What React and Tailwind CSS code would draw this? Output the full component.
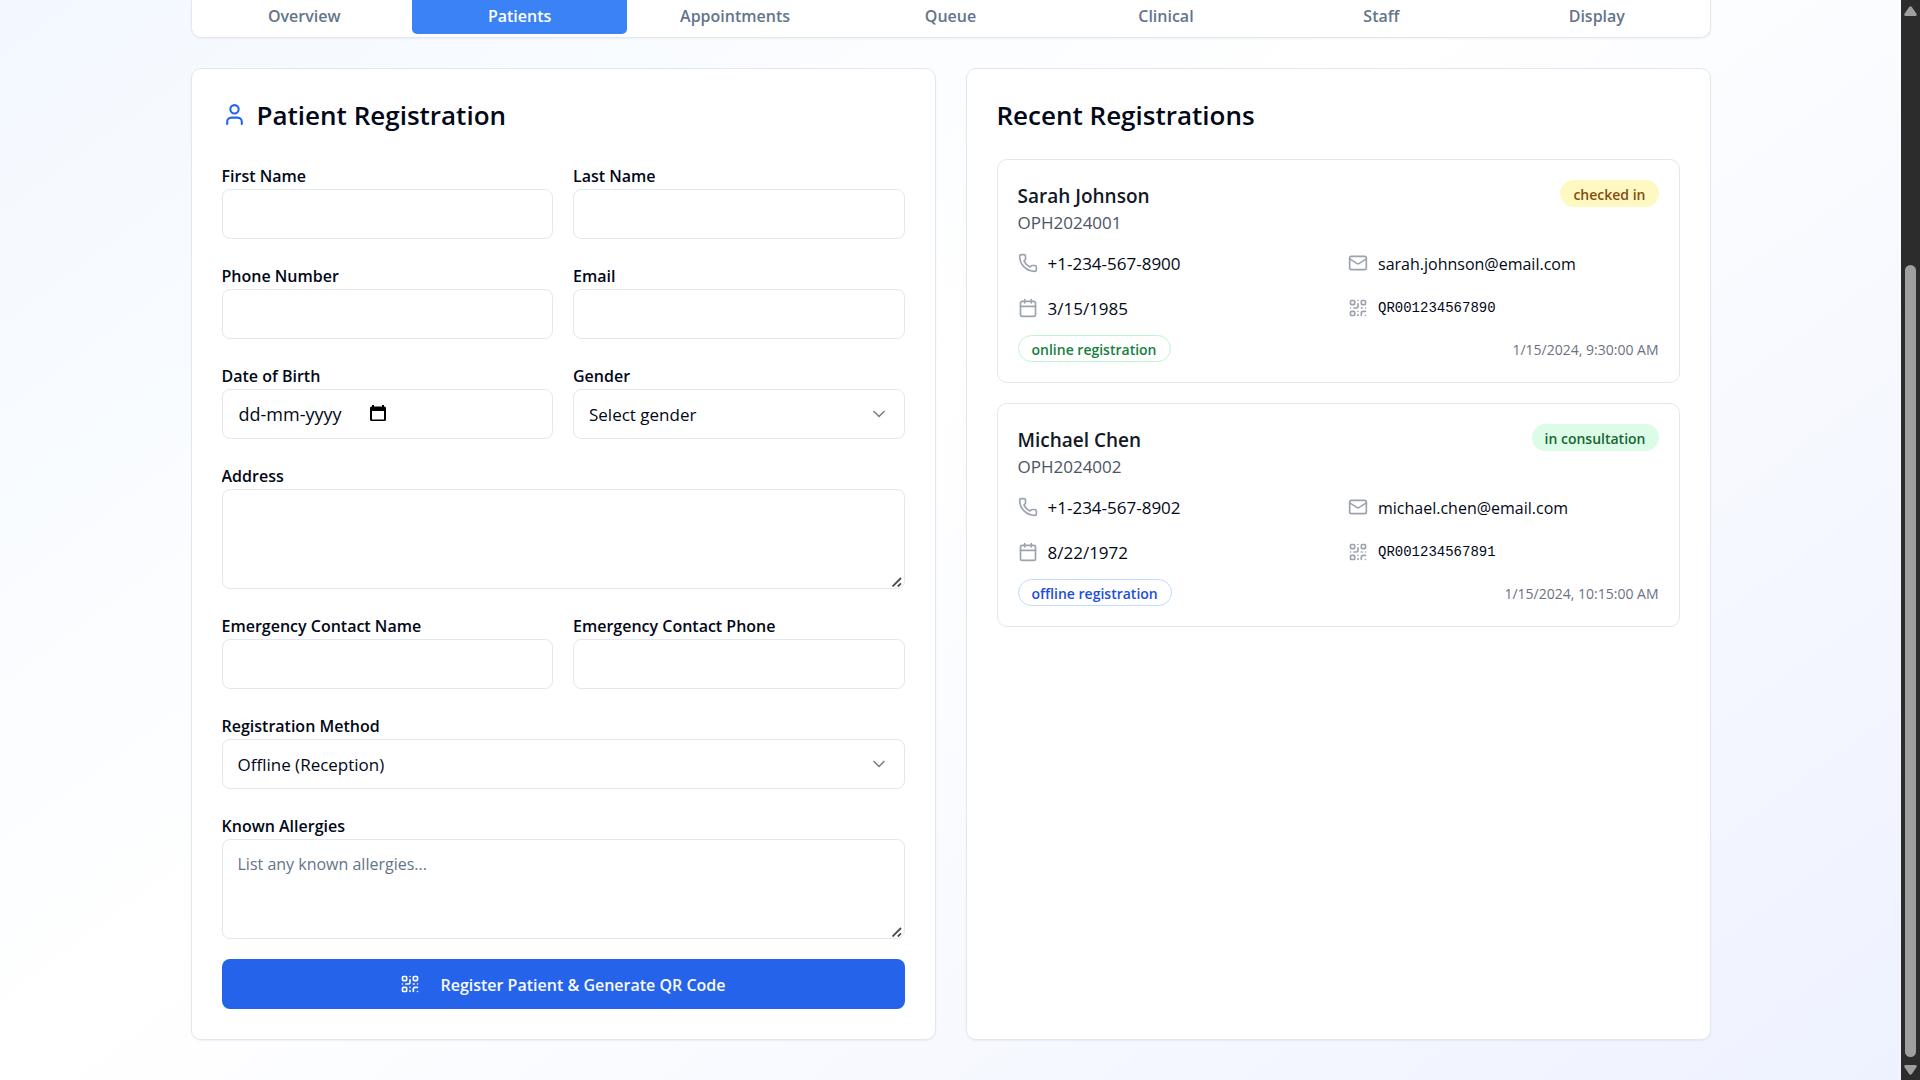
import React from "react";
import { User, Phone, Mail, Calendar, QrCode, ChevronDown } from "lucide-react";

const tabs = ["Overview", "Patients", "Appointments", "Queue", "Clinical", "Staff", "Display"];

const patients = [
  {
    name: "Sarah Johnson",
    id: "OPH2024001",
    phone: "+1-234-567-8900",
    email: "sarah.johnson@email.com",
    born: "3/15/1985",
    qr: "QR001234567890",
    status: "checked in",
    statusClass: "bg-[#fef9c3] text-[#854d0e]",
    method: "online registration",
    methodClass: "border-[#bbf7d0] text-[#15803d]",
    time: "1/15/2024, 9:30:00 AM",
  },
  {
    name: "Michael Chen",
    id: "OPH2024002",
    phone: "+1-234-567-8902",
    email: "michael.chen@email.com",
    born: "8/22/1972",
    qr: "QR001234567891",
    status: "in consultation",
    statusClass: "bg-[#dcfce7] text-[#166534]",
    method: "offline registration",
    methodClass: "border-[#bfdbfe] text-[#1d4ed8]",
    time: "1/15/2024, 10:15:00 AM",
  },
];

const control =
  "block w-full rounded-[8px] border border-[#e2e8f0] bg-white px-[15px] text-[#020817] placeholder:text-[#64748b] outline-none focus:border-[#2563eb]";

function Field({ id, label, children }) {
  return (
    <div>
      <label htmlFor={id} className="block h-[30px] truncate pt-1 text-base leading-[26px] font-semibold">
        {label}
      </label>
      {children}
    </div>
  );
}

function TextField({ id, label, type = "text" }) {
  return (
    <Field id={id} label={label}>
      <input id={id} type={type} className={`${control} h-[50px] text-[17px]`} />
    </Field>
  );
}

function SelectField({ id, label, options }) {
  return (
    <Field id={id} label={label}>
      <div className="relative">
        <select id={id} className={`${control} h-[50px] appearance-none pt-0.5 pr-12 text-[17px]`}>
          {options.map((o) => (
            <option key={o}>{o}</option>
          ))}
        </select>
        <ChevronDown
          size={20}
          className="pointer-events-none absolute top-[15px] right-4 text-[#020817] opacity-50"
        />
      </div>
    </Field>
  );
}

function AreaField({ id, label, placeholder }) {
  return (
    <Field id={id} label={label}>
      <div className="relative">
        <textarea
          id={id}
          placeholder={placeholder}
          className={`${control} h-[100px] resize-y py-3 text-base [&::-webkit-resizer]:bg-transparent`}
        />
        <svg
          width="10"
          height="10"
          viewBox="0 0 10 10"
          className="pointer-events-none absolute right-[3px] bottom-0.5"
          stroke="#4a4a4a"
          strokeWidth="1.800"
        >
          <path d="M.5 9.500 9 1M5.800 9.500 9 6.300" />
        </svg>
      </div>
    </Field>
  );
}

function DateField({ id, label }) {
  return (
    <Field id={id} label={label}>
      <div className="flex h-[50px] items-center rounded-[8px] border border-[#e2e8f0] bg-white px-4">
        <input
          id={id}
          type="text"
          placeholder="dd-mm-yyyy"
          className="w-[130px] bg-transparent text-lg outline-none placeholder:text-[#020817]"
        />
        <button type="button" aria-label="Open calendar" className="mb-0.5">
          <svg width="18" height="18" viewBox="0 0 18 18" fill="none">
            <path
              d="M3 1h2v1.500h8V1h2v1.500h.5A1.500 1.500 0 0 1 17 4v11.500a1.500 1.500 0 0 1-1.500 1.500h-13A1.500 1.500 0 0 1 1 15.500V4a1.500 1.500 0 0 1 1.500-1.500H3zM3 7v8.500h12V7z"
              fill="#000"
              fillRule="evenodd"
            />
          </svg>
        </button>
      </div>
    </Field>
  );
}

function Detail({ icon: Icon, children, kind }) {
  return (
    <div className="flex h-[35px] items-center gap-2.5">
      <Icon size={20} className="shrink-0 text-[#9ca3af]" />
      <span
        className={
          kind === "mono"
            ? "font-['Liberation_Mono',monospace] text-sm leading-5"
            : kind === "email"
              ? "truncate pt-0.5 text-base leading-6"
              : "truncate pt-0.5 text-[17px] leading-6"
        }
      >
        {children}
      </span>
    </div>
  );
}

function PatientCard({ p }) {
  return (
    <li className="rounded-[10px] border border-[#e2e8f0] p-5">
      <div className="flex items-start justify-between">
        <div>
          <h3 className="pt-0.5 text-[19px] leading-7 font-semibold text-[#111827]">{p.name}</h3>
          <p className="pt-[1px] text-[17px] leading-6 text-[#4b5563]">{p.id}</p>
        </div>
        <span className={`flex h-[27px] items-center rounded-full px-[13px] pt-0.5 text-sm font-semibold ${p.statusClass}`}>
          {p.status}
        </span>
      </div>
      <div className="mt-2.5 grid grid-cols-2 gap-x-5 gap-y-2.5">
        <Detail icon={Phone}>{p.phone}</Detail>
        <Detail icon={Mail} kind="email">
          {p.email}
        </Detail>
        <Detail icon={Calendar}>{p.born}</Detail>
        <Detail icon={QrCode} kind="mono">
          {p.qr}
        </Detail>
      </div>
      <div className="mt-2.5 flex items-center justify-between">
        <span className={`flex h-[27px] items-center rounded-full border px-[13px] pt-0.5 text-sm font-semibold ${p.methodClass}`}>
          {p.method}
        </span>
        <time className="pt-0.5 text-sm leading-5 text-[#6b7280]">{p.time}</time>
      </div>
    </li>
  );
}

function ScrollRail() {
  return (
    <div aria-hidden="true" className="flex w-[19px] shrink-0 flex-col items-center bg-[#2c2c2c] pt-1.5 pb-[5px]">
      <svg width="13" height="10" viewBox="0 0 13 10">
        <path d="M5.200 1Q6.500-.6 7.800 1L12.600 8Q13 10 11.500 10h-10Q0 10 .4 8z" fill="#9f9f9f" />
      </svg>
      <div className="flex w-[11px] grow flex-col pt-[249px] pb-2">
        <div className="grow rounded-full bg-[#9f9f9f]" />
      </div>
      <svg width="13" height="10" viewBox="0 0 13 10">
        <path d="M5.200 9Q6.500 10.600 7.800 9L12.600 2Q13 0 11.500 0h-10Q0 0 .4 2z" fill="#9f9f9f" />
      </svg>
    </div>
  );
}

export default function App() {
  return (
    <div className="flex min-h-screen font-['Open_Sans','Noto_Sans',sans-serif] text-[#020817]">
      <div className="min-w-0 grow bg-[linear-gradient(to_bottom_right,#eff6ff,#ffffff,#eef2ff)] bg-[length:100%_1418px] bg-bottom">
        <div className="mx-auto max-w-[1600px] px-10 pb-10">
          <nav className="grid grid-cols-7 rounded-b-[10px] border border-t-0 border-[#e2e8f0] bg-white px-[5px] pb-[3px] shadow-xs">
            {tabs.map((t) => (
              <button
                key={t}
                type="button"
                className={
                  t === "Patients"
                    ? "h-[34px] rounded-b-[5px] bg-[#3b82f6] pb-0.5 text-base leading-6 font-semibold text-white"
                    : "h-[34px] rounded-b-[5px] pb-0.5 text-base leading-6 font-semibold text-[#64748b]"
                }
              >
                {t}
              </button>
            ))}
          </nav>

          <main className="mt-[30px] grid grid-cols-2 gap-[30px]">
            <section className="rounded-[10px] border border-[#e2e8f0] bg-white p-[30px] shadow-xs">
              <h2 className="flex h-[30px] items-center gap-2.5 text-[26px] leading-8 font-semibold">
                <User size={25} className="shrink-0 text-[#2563eb]" />
                <span className="pt-0.5">Patient Registration</span>
              </h2>
              <form className="mt-[30px] flex flex-col gap-5">
                <div className="grid grid-cols-2 gap-5">
                  <TextField id="first" label="First Name" />
                  <TextField id="last" label="Last Name" />
                </div>
                <div className="grid grid-cols-2 gap-5">
                  <TextField id="phone" label="Phone Number" type="tel" />
                  <TextField id="email" label="Email" type="email" />
                </div>
                <div className="grid grid-cols-2 gap-5">
                  <DateField id="dob" label="Date of Birth" />
                  <SelectField id="gender" label="Gender" options={["Select gender", "Male", "Female", "Other"]} />
                </div>
                <AreaField id="address" label="Address" />
                <div className="grid grid-cols-2 gap-5">
                  <TextField id="ename" label="Emergency Contact Name" />
                  <TextField id="ephone" label="Emergency Contact Phone" type="tel" />
                </div>
                <SelectField id="method" label="Registration Method" options={["Offline (Reception)", "Online"]} />
                <AreaField id="allergies" label="Known Allergies" placeholder="List any known allergies..." />
                <button
                  type="button"
                  className="flex h-[50px] items-center justify-center gap-5 rounded-[8px] bg-[#2563eb] text-base font-semibold text-[#f8fafc]"
                >
                  <QrCode size={20} />
                  <span className="pt-0.5">Register Patient &amp; Generate QR Code</span>
                </button>
              </form>
            </section>

            <section className="rounded-[10px] border border-[#e2e8f0] bg-white p-[30px] shadow-xs">
              <h2 className="flex h-[30px] items-center text-[26px] leading-8 font-semibold">
                <span className="pt-0.5">Recent Registrations</span>
              </h2>
              <ul className="mt-[30px] flex flex-col gap-5">
                {patients.map((p) => (
                  <PatientCard key={p.id} p={p} />
                ))}
              </ul>
            </section>
          </main>
        </div>
      </div>
      <ScrollRail />
    </div>
  );
}
